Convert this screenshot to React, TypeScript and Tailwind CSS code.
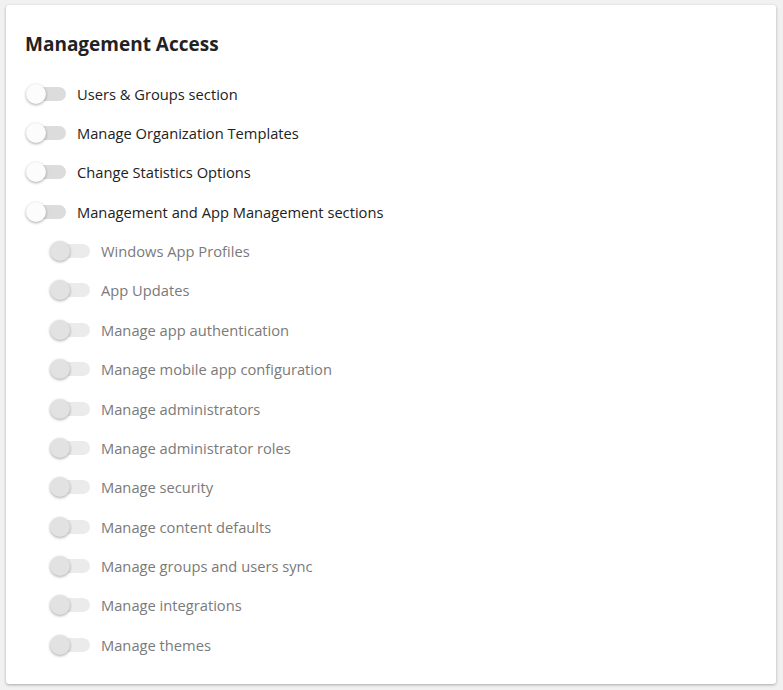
const mainItems = [
  'Users & Groups section',
  'Manage Organization Templates',
  'Change Statistics Options',
  'Management and App Management sections',
];

const subItems = [
  'Windows App Profiles',
  'App Updates',
  'Manage app authentication',
  'Manage mobile app configuration',
  'Manage administrators',
  'Manage administrator roles',
  'Manage security',
  'Manage content defaults',
  'Manage groups and users sync',
  'Manage integrations',
  'Manage themes',
];

const Toggle = ({ disabled }: { disabled?: boolean }) => (
  <div className="relative w-[40px] h-[20px] shrink-0">
    <div
      className={`absolute left-[4px] top-[3px] w-[36px] h-[14px] rounded-full ${
        disabled ? 'bg-[#ebebeb]' : 'bg-[#dcdcdc]'
      }`}
    ></div>
    <div
      className={`absolute left-0 top-0 w-[20px] h-[20px] rounded-full shadow-[0_1px_3px_rgba(0,0,0,0.35)] ${
        disabled ? 'bg-[#e2e2e2]' : 'bg-[#fcfcfc]'
      }`}
    ></div>
  </div>
);

const App = () => {
  return (
    <div className="min-h-screen bg-[#f1f1f1] pt-[5px] pl-[6px] font-['Open_Sans',sans-serif]">
      <div className="w-[770px] h-[679px] bg-white rounded-[3px] shadow-[0_1px_3px_rgba(0,0,0,0.3)] pl-[20px] pt-[25px]">
        <h2 className="text-[19px] font-bold text-[#222] leading-[28px] -ml-[1px]">Management Access</h2>

        <div className="mt-[16px]">
          {mainItems.map((item) => (
            <div key={item} className="flex items-center h-[39.36px]">
              <Toggle />
              <span className="ml-[11px] text-[14.7px] text-[#222]">{item}</span>
            </div>
          ))}
          {subItems.map((item) => (
            <div key={item} className="flex items-center h-[39.36px] pl-[24px]">
              <Toggle disabled />
              <span className="ml-[11px] text-[14.7px] text-[#7a7a7a]">{item}</span>
            </div>
          ))}
        </div>
      </div>
    </div>
  );
};

export default App;
